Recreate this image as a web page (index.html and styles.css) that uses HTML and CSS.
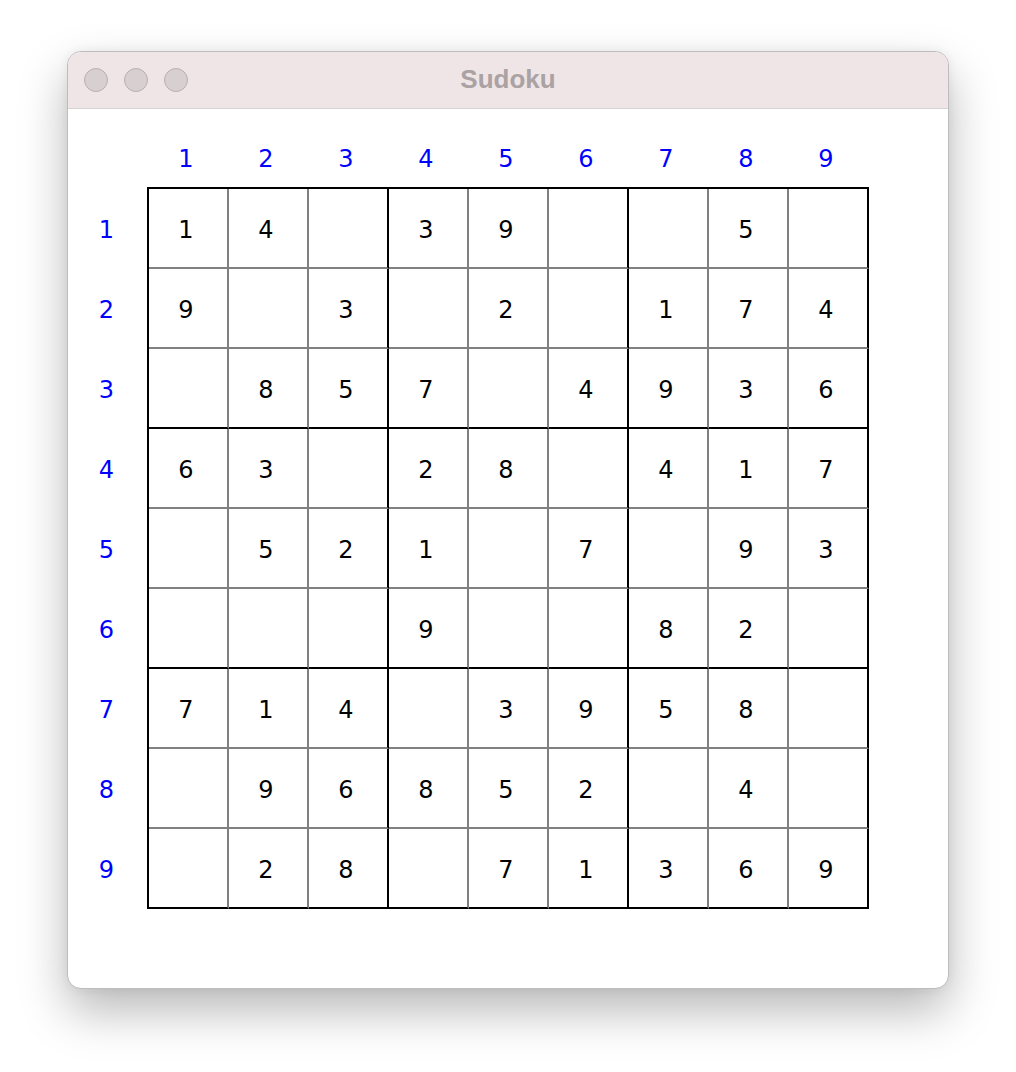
FILE: index.html
```html
<!DOCTYPE html>
<html>
<head>
<meta charset="utf-8">
<link rel="stylesheet" href="styles.css">
</head>
<body>
<div class="window">
  <div class="titlebar">
    <div class="lights"><span class="light"></span><span class="light"></span><span class="light"></span></div>
    <div class="title">Sudoku</div>
  </div>
  <div class="content">
    <div class="corner"></div>
    <div class="col-labels">
      <span>1</span><span>2</span><span>3</span><span>4</span><span>5</span><span>6</span><span>7</span><span>8</span><span>9</span>
    </div>
    <div class="row-labels">
      <span>1</span><span>2</span><span>3</span><span>4</span><span>5</span><span>6</span><span>7</span><span>8</span><span>9</span>
    </div>
    <div class="board" id="board"></div>
  </div>
</div>
<script src="script.js"></script>
</body>
</html>
```
FILE: script.js
```js
const rows = [
  "14 39  5 ",
  "9 3 2 174",
  " 857 4936",
  "63 28 417",
  " 521 7 93",
  "   9  82 ",
  "714 3958 ",
  " 96852 4 ",
  " 28 71369"
];
const board = document.getElementById('board');
for (let r = 0; r < 9; r++) {
  for (let c = 0; c < 9; c++) {
    const d = document.createElement('div');
    d.className = 'cell';
    if (c === 2 || c === 5 || c === 8) d.classList.add('br');
    if (r === 2 || r === 5 || r === 8) d.classList.add('bb');
    const ch = rows[r][c];
    d.textContent = ch === ' ' ? '' : ch;
    board.appendChild(d);
  }
}
```
FILE: styles.css
```css
html, body {
  margin: 0;
  padding: 0;
  background: #ffffff;
}
body {
  width: 1016px;
  height: 1072px;
  overflow: hidden;
}
.window {
  margin: 51px 0 0 67px;
  width: 882px;
  height: 938px;
  border: 1px solid #bdbdbd;
  border-radius: 14px;
  background: #ffffff;
  box-shadow: 0 22px 48px rgba(0, 0, 0, 0.28), 0 0 12px rgba(0, 0, 0, 0.06);
  overflow: hidden;
  box-sizing: border-box;
}
.titlebar {
  position: relative;
  height: 56px;
  background: #efe5e6;
  border-bottom: 1px solid #d8d3d3;
  display: flex;
  align-items: center;
  justify-content: center;
}
.lights {
  position: absolute;
  left: 16px;
  top: 16px;
  display: flex;
  gap: 16px;
}
.light {
  width: 22px;
  height: 22px;
  border-radius: 50%;
  background: #d8cfd0;
  border: 1px solid #b9b0b1;
}
.title {
  font-family: "Liberation Sans", Arial, sans-serif;
  font-weight: bold;
  font-size: 26px;
  color: #aaa2a3;
  margin-top: -2px;
}
.content {
  display: grid;
  grid-template-columns: 79px 722px;
  grid-template-rows: 60px 722px;
  padding-top: 18px;
  font-family: "DejaVu Sans", Verdana, sans-serif;
  font-size: 24px;
}
.col-labels {
  display: grid;
  grid-template-columns: repeat(9, 78px);
  column-gap: 2px;
  padding-left: 2px;
  color: #0000ff;
}
.col-labels span, .row-labels span {
  display: flex;
  align-items: center;
  justify-content: center;
}
.col-labels span {
  padding: 4px 4px 0 0;
}
.row-labels {
  display: grid;
  grid-template-rows: repeat(9, 78px);
  row-gap: 2px;
  padding-top: 2px;
  color: #0000ff;
}
.row-labels span {
  padding: 4px 2px 0 0;
}
.board {
  display: grid;
  grid-template-columns: repeat(9, 80px);
  grid-template-rows: repeat(9, 80px);
  border-left: 2px solid #000;
  border-top: 2px solid #000;
}
.cell {
  box-sizing: border-box;
  border-right: 2px solid #808080;
  border-bottom: 2px solid #808080;
  padding: 4px 4px 0 0;
  display: flex;
  align-items: center;
  justify-content: center;
  color: #000;
}
.cell.br {
  border-right-color: #000;
}
.cell.bb {
  border-bottom-color: #000;
}
```
